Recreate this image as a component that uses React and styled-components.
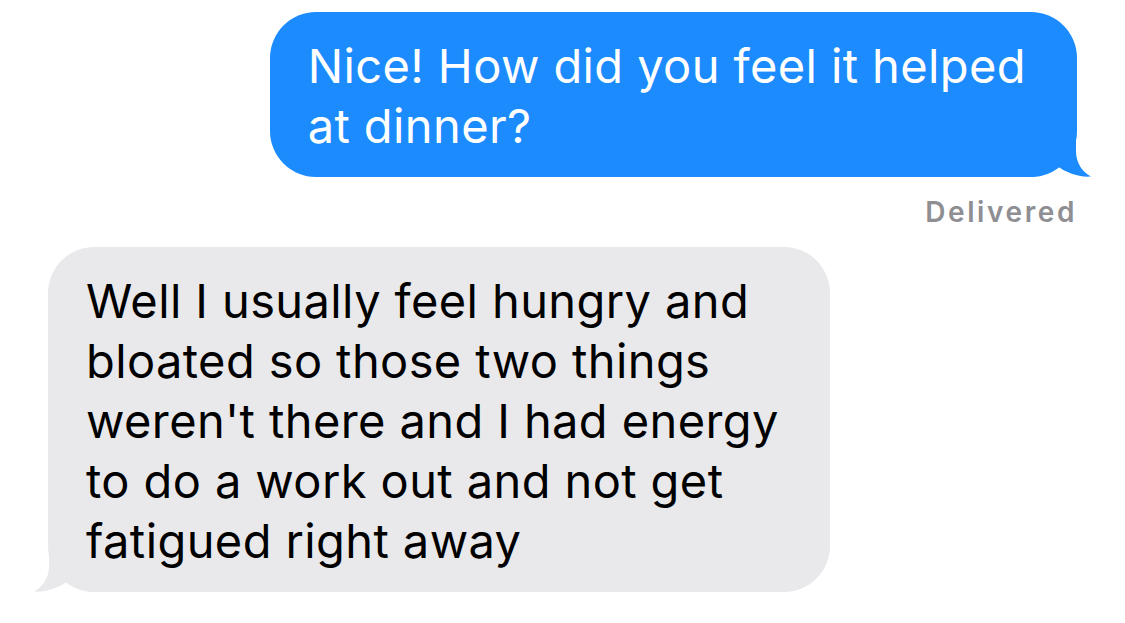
import React from 'react'
import styled, { createGlobalStyle } from 'styled-components'

const GlobalStyle = createGlobalStyle`
    body {
        margin: 0;
        background: #ffffff;
        font-family: Inter, "Liberation Sans", sans-serif;
    }
`

function Tail({ side, color }) {
    return (
        <TailSvg side={side} width="63" height="46" viewBox="0 0 63 46">
            <path
                d="M0 0 L47 0 L47 20 C47 33 54 41 62 45.5 C50 46.5 37 42 27 34 C20 41 12 46 0 46 Z"
                fill={color}
            />
        </TailSvg>
    )
}

function App() {
    return (
        <Thread>
            <GlobalStyle />
            <Row side="right">
                <Bubble side="right">
                    Nice! How did you feel it helped<br />
                    at dinner?
                    <Tail side="right" color="#1b8bfe" />
                </Bubble>
            </Row>

            <Status>Delivered</Status>

            <Row side="left">
                <Bubble side="left">
                    Well I usually feel hungry and<br />
                    bloated so those two things<br />
                    weren't there and I had energy<br />
                    to do a work out and not get<br />
                    fatigued right away
                    <Tail side="left" color="#e9e9eb" />
                </Bubble>
            </Row>
        </Thread>
    )
}

export default App

const Thread = styled.div`
    display: flex;
    flex-direction: column;
    padding: 12px 48px 0 48px;
    min-height: 100vh;
    box-sizing: border-box;
`

const Row = styled.div`
    display: flex;
    justify-content: ${props => props.side === 'right' ? 'flex-end' : 'flex-start'};
`

const Bubble = styled.div`
    position: relative;
    z-index: 0;
    padding: 24px 51px 21px 38px;
    border-radius: 46px;
    font-size: 47px;
    line-height: 60px;
    letter-spacing: 0.4px;
    white-space: nowrap;
    background: ${props => props.side === 'right' ? '#1b8bfe' : '#e9e9eb'};
    color: ${props => props.side === 'right' ? '#ffffff' : '#000000'};
`

const TailSvg = styled.svg`
    position: absolute;
    z-index: -1;
    bottom: 0;
    ${props => props.side === 'right' ? 'right: -15px;' : 'left: -15px; transform: scaleX(-1);'}
`

const Status = styled.div`
    margin: 18px 0 18px 0;
    text-align: right;
    font-size: 28px;
    line-height: 34px;
    font-weight: 600;
    letter-spacing: 2.6px;
    color: #8e8e93;
`
